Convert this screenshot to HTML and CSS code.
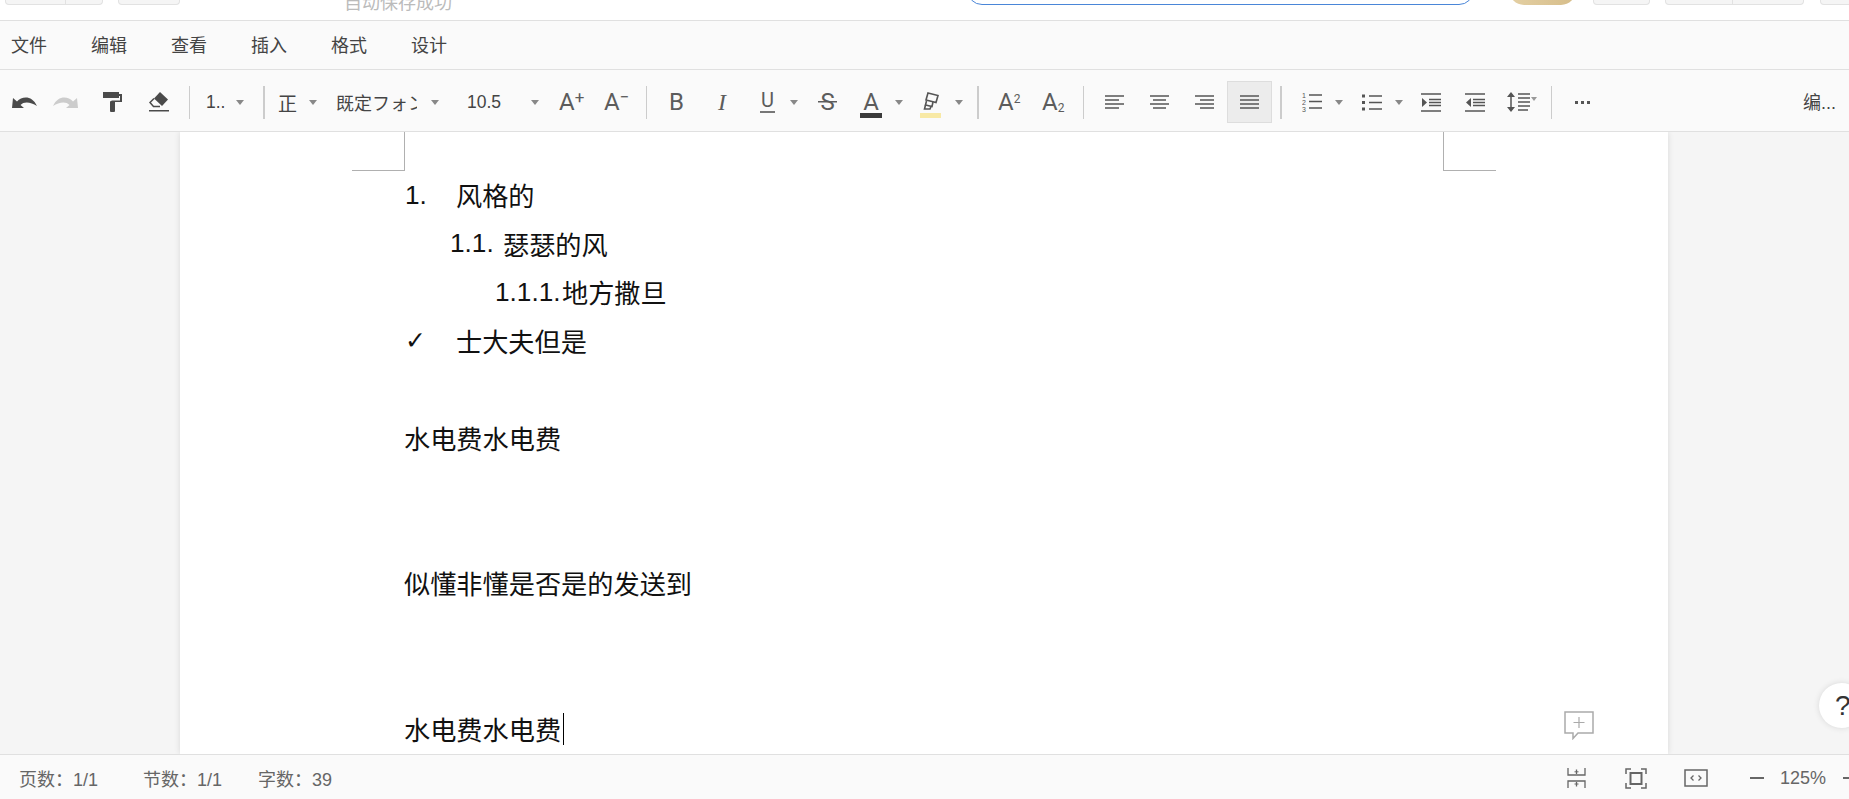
FILE: index.html
```html
<!DOCTYPE html>
<html lang="zh-CN">
<head>
  <meta charset="UTF-8">
  <title>文档编辑</title>
  <link rel="stylesheet" href="styles.css">
</head>
<body>
  <div class="topbar">
    <div class="stub stub-a"><span class="stub-part stub-a1"></span><span class="stub-part stub-a2"></span></div>
    <div class="stub stub-b"></div>
    <div class="save-state">自动保存成功</div>
    <div class="search"></div>
    <div class="gold"></div>
    <div class="stub stub-c"></div>
    <div class="stub stub-d"><span class="stub-part stub-d1"></span><span class="stub-part stub-d2"></span></div>
    <div class="stub stub-e"></div>
  </div>

  <nav class="menubar">
    <a>文件</a><a>编辑</a><a>查看</a><a>插入</a><a>格式</a><a>设计</a>
  </nav>

  <div class="toolbar">
    <svg width="25" height="12" viewBox="0 0 25 12" class="dark"><path d="M0 12 L1 2 L5 5.500 C10 0 20 -1 25 10 C19 6 12 5 8.500 9 L12 12 Z"/></svg>
    <svg width="25" height="12" viewBox="0 0 25 12" class="off"><path d="M25 12 L24 2 L20 5.500 C15 0 5 -1 0 10 C6 6 13 5 16.500 9 L13 12 Z"/></svg>
    <svg width="20" height="20" viewBox="0 0 20 20" class="dark"><path d="M0 0H16V2H19V10H10V12H7V10.500H8.500V8.500H17V4H16V6H0Z"/><rect x="7" y="9" width="5" height="11" rx="1"/></svg>
    <svg width="20" height="20" viewBox="0 0 20 20" class="dark"><path d="M11 0 L19 7.500 L13 14 L5 6.500 Z"/><path d="M5 6.500 L1 10.500 L4.500 14.500 H11" fill="none" stroke="#4a4a4a" stroke-width="1.500"/><rect y="18" width="20" height="1.500"/></svg>
    <span class="sep"></span>
    <span class="tb-text">1..</span><i class="caret"></i>
    <span class="sep sep-wide"></span>
    <span class="tb-text tb-cjk">正</span><i class="caret"></i>
    <span class="tb-text tb-font">既定フォン</span><i class="caret"></i>
    <span class="tb-text">10.5</span><i class="caret"></i>
    <span class="glyph">A<sup>+</sup></span>
    <span class="glyph">A<sup>−</sup></span>
    <span class="sep"></span>
    <span class="glyph">B</span>
    <span class="glyph glyph-i">I</span>
    <span class="glyph glyph-u">U</span><i class="caret"></i>
    <span class="glyph glyph-s">S</span>
    <span class="glyph glyph-color">A</span><i class="caret"></i>
    <span class="marker">
      <svg width="17" height="20" viewBox="0 0 17 20" fill="none" stroke="#555" stroke-width="1.600"><path d="M6 1 L16 3.500 L14 10.500 L4 8 Z"/><path d="M4.500 9 L3.500 13 L10 14.500 L11 10"/><path d="M3.500 13 L2.500 17 H8 L9 14.500"/></svg>
    </span><i class="caret"></i>
    <span class="sep sep-wide"></span>
    <span class="glyph">A<sup class="num">2</sup></span>
    <span class="glyph">A<sub class="num">2</sub></span>
    <span class="sep"></span>
    <svg width="19" height="14" viewBox="0 0 19 14" class="lines"><path d="M0 1H19M0 5H14M0 9H19M0 13H14"/></svg>
    <svg width="19" height="14" viewBox="0 0 19 14" class="lines"><path d="M0 1H19M3 5H16M0 9H19M3 13H16"/></svg>
    <svg width="19" height="14" viewBox="0 0 19 14" class="lines"><path d="M0 1H19M5 5H19M0 9H19M5 13H19"/></svg>
    <span class="active">
      <svg width="19" height="15" viewBox="0 0 19 15" class="lines"><path d="M0 1H19M0 5H19M0 9H19M0 13H19"/></svg>
    </span>
    <span class="sep sep-wide"></span>
    <svg width="20" height="20" viewBox="0 0 20 20" class="lines"><text x="0" y="6" class="tiny">1</text><text x="0" y="13" class="tiny">2</text><text x="0" y="20" class="tiny">3</text><path d="M7 3H20M7 9.500H20M7 16H20"/></svg><i class="caret"></i>
    <svg width="20" height="17" viewBox="0 0 20 17" class="lines"><path d="M7 2H20M7 8.500H20M7 15H20"/><path d="M0 2H3M0 8.500H3M0 15H3" stroke-width="3"/></svg><i class="caret"></i>
    <svg width="20" height="19" viewBox="0 0 20 19" class="lines"><path d="M0 1H20M8 6.500H20M8 9.500H20M8 12.500H20M0 18H20"/><path d="M1 5L6 9.500L1 14Z" class="solid"/></svg>
    <svg width="20" height="19" viewBox="0 0 20 19" class="lines"><path d="M0 1H20M8 6.500H20M8 9.500H20M8 12.500H20M0 18H20"/><path d="M6 5L1 9.500L6 14Z" class="solid"/></svg>
    <svg width="30" height="20" viewBox="0 0 30 20" class="lines"><path d="M4 3V17"/><path d="M4 0L8 5H0ZM4 20L8 15H0Z" class="solid"/><path d="M11 2H23M11 6H23M11 10H23M11 14H23M11 18H21"/><path d="M24 5H30L27 9Z" class="solid soft"/></svg>
    <span class="sep"></span>
    <span class="dots"><i></i><i></i><i></i></span>
    <span class="tb-edit">编...</span>
  </div>

  <main class="workspace">
    <section class="page">
      <div class="page-top">
        <span class="corner corner-left"></span>
        <span class="corner corner-right"></span>
      </div>
      <p class="line"><span class="mark mark-1">1.</span>风格的</p>
      <p class="line level-2"><span class="mark mark-2">1.1.</span>瑟瑟的风</p>
      <p class="line level-3"><span class="mark mark-3">1.1.1.</span>地方撒旦</p>
      <p class="line"><span class="mark mark-1 mark-check">✓</span>士大夫但是</p>
      <p class="line"></p>
      <p class="line">水电费水电费</p>
      <p class="line"></p>
      <p class="line"></p>
      <p class="line">似懂非懂是否是的发送到</p>
      <p class="line"></p>
      <p class="line"></p>
      <p class="line">水电费水电费<span class="cursor"></span></p>
    </section>
    <svg class="add-comment" width="30" height="29" viewBox="0 0 30 29" fill="none" stroke="#aaa" stroke-width="1.500"><path d="M1 1H29V22H14L9 27.500V22H1Z"/><path d="M15 6V17M9.500 11.500H20.500" stroke-width="1.200"/></svg>
    <div class="help">?</div>
  </main>

  <footer class="statusbar">
    <span class="stat stat-page">页数：1/1</span>
    <span class="stat stat-section">节数：1/1</span>
    <span class="stat stat-words">字数：39</span>
    <svg width="19" height="20" viewBox="0 0 19 20" fill="none" stroke="#666" stroke-width="1.300" class="st-width"><path d="M1 0V7H18V0M1 20V13H18V20M9.500 1.500V6M9.500 14V18.500"/><path d="M7.500 3.800H11.500M7.500 16H11.500" stroke-width="1"/></svg>
    <svg width="22" height="21" viewBox="0 0 22 21" fill="none" stroke="#666" stroke-width="1.500" class="st-page"><path d="M6 1H1V6M16 1H21V6M6 20H1V15M16 20H21V15"/><rect x="5.500" y="5" width="11" height="11" stroke-width="2"/></svg>
    <svg width="24" height="18" viewBox="0 0 24 18" fill="none" stroke="#666" stroke-width="1.500" class="st-window"><rect x="1" y="1" width="22" height="16"/><path d="M9.500 6.500L7 9L9.500 11.500M14.500 6.500L17 9L14.500 11.500" stroke-width="1.300"/></svg>
    <span class="zoom-minus"></span>
    <span class="zoom-value">125%</span>
    <span class="zoom-plus"></span>
  </footer>
</body>
</html>
```

FILE: styles.css
```css
* {
  box-sizing: border-box;
}
html, body {
  height: 100%;
}
body {
  margin: 0;
  display: flex;
  flex-direction: column;
  overflow: hidden;
  font-family: "Liberation Sans", "Noto Sans CJK SC", sans-serif;
  color: #444;
  background: #fff;
}

/* top bar, cut off by the window edge */
.topbar {
  height: 21px;
  display: flex;
  align-items: flex-start;
  overflow: hidden;
  background: #fff;
  border-bottom: 1px solid #e0e0e0;
}
.stub {
  display: flex;
  height: 5px;
  background: #f5f5f5;
  border: 1px solid #e2e2e2;
  border-top: none;
  border-radius: 0 0 4px 4px;
  flex-shrink: 0;
}
.stub-part + .stub-part {
  border-left: 1px solid #e2e2e2;
}
.stub-a {
  width: 98px;
  margin-left: 5px;
}
.stub-a1 { width: 60px; }
.stub-a2 { width: 38px; }
.stub-b {
  width: 62px;
  margin-left: 15px;
}
.save-state {
  width: 110px;
  margin: -6px 0 0 164px;
  font-size: 18px;
  line-height: 18px;
  color: #bbb;
  flex-shrink: 0;
}
.search {
  width: 507px;
  height: 30px;
  margin: -25px 0 0 513px;
  border: 1px solid #4a86d8;
  border-radius: 16px;
  flex-shrink: 0;
}
.gold {
  width: 67px;
  height: 30px;
  margin: -25px 0 0 35px;
  border-radius: 15px;
  background: linear-gradient(90deg, #e4d0a4, #d6bd8a);
  flex-shrink: 0;
}
.stub-c {
  width: 57px;
  margin-left: 17px;
}
.stub-d {
  width: 139px;
  margin-left: 15px;
}
.stub-d1 { width: 67px; }
.stub-d2 { width: 72px; }
.stub-e {
  width: 60px;
  margin-left: 16px;
}

/* menu */
.menubar {
  height: 49px;
  display: flex;
  align-items: center;
  gap: 44px;
  padding: 0 0 2px 11px;
  font-size: 18px;
  color: #444;
  background: #fafafa;
  border-bottom: 1px solid #e0e0e0;
}

/* toolbar: one column per control, tracks are the distance to the next control */
.toolbar {
  height: 62px;
  display: grid;
  grid-template-columns:
    41px 50px 46px 40px 17px 30px 27px 15px 31px 27px 95px
    36px 64px 28px 45px 42px 23px 48px 43px 30px 28px 42px
    35px 25px 35px 22px 21px 44px 41px 22px 45px 45px 32px
    53px 22px 33px 27px 33px 26px 44px 42px 44px 24px 228px 1fr;
  align-items: center;
  justify-items: start;
  padding: 3px 0 0 12px;
  background: #fafafa;
  border-bottom: 1px solid #e0e0e0;
  color: #555;
}
.dark { fill: #4a4a4a; }
.off { fill: #ccc; }
.sep {
  width: 1px;
  height: 33px;
  background: #ccc;
}
.sep-wide {
  width: 2px;
}
.caret {
  width: 0;
  height: 0;
  border-left: 4px solid transparent;
  border-right: 4px solid transparent;
  border-top: 5px solid #888;
}
.tb-text {
  font-size: 17.5px;
  color: #444;
  white-space: nowrap;
}
.tb-cjk {
  font-size: 19px;
}
.tb-font {
  width: 81px;
  overflow: hidden;
  font-size: 18px;
}
.tb-edit {
  margin-top: -2px;
  font-size: 18px;
  color: #444;
  white-space: nowrap;
}
.glyph {
  font-family: Roboto, "Liberation Sans", sans-serif;
  font-size: 24px;
  line-height: 1;
  color: #5c5c5c;
  white-space: nowrap;
}
.glyph sup, .glyph sub {
  font-size: 17px;
  line-height: 0;
}
.glyph sup {
  vertical-align: 7px;
}
.glyph sub {
  vertical-align: -2px;
}
.glyph .num {
  font-size: 12px;
}
.glyph-i {
  font-family: "Liberation Serif", serif;
  font-style: italic;
  margin-left: 1px;
}
.glyph-u {
  display: block;
  font-size: 20px;
  padding: 0 1px 1px;
  border-bottom: 2px solid #777;
  line-height: 19px;
}
.glyph-s {
  display: block;
  width: 19px;
  text-align: center;
  background: linear-gradient(#5c5c5c, #5c5c5c) center / 100% 1.500px no-repeat;
}
.glyph-color {
  display: block;
  width: 22px;
  padding-top: 6px;
  text-align: center;
  line-height: 21px;
  border-bottom: 5px solid #3a3a3a;
}
.marker {
  display: flex;
  justify-content: center;
  width: 21px;
  height: 32px;
  padding-top: 6px;
  border-bottom: 5px solid #f8e9a5;
}
.lines {
  fill: none;
  stroke: #555;
  stroke-width: 1.5;
}
.lines .solid {
  fill: #555;
  stroke: none;
}
.lines .soft {
  fill: #999;
}
.lines .tiny {
  font-size: 7px;
  fill: #555;
  stroke: none;
}
.active {
  width: 45px;
  height: 42px;
  display: flex;
  align-items: center;
  justify-content: center;
  background: #ececec;
  border: 1px solid #ddd;
}
.dots {
  display: flex;
  gap: 3px;
}
.dots i {
  width: 3px;
  height: 3px;
  background: #555;
}

/* document area */
.workspace {
  position: relative;
  flex: 1;
  min-height: 0;
  overflow: hidden;
  background: #f5f5f5;
}
.page {
  width: 1488px;
  height: 100%;
  margin-left: 180px;
  overflow: hidden;
  background: #fff;
  box-shadow: 0 0 6px rgba(0, 0, 0, 0.12);
  font-size: 26.2px;
  color: #111;
}
.page-top {
  display: flex;
  justify-content: space-between;
  padding: 0 172px;
}
.corner {
  width: 53px;
  height: 39px;
  border-bottom: 1px solid #b0b0b0;
}
.corner-left {
  border-right: 1px solid #b0b0b0;
}
.corner-right {
  border-left: 1px solid #b0b0b0;
}
.line {
  display: flex;
  align-items: center;
  height: 48.5px;
  margin: 0;
  padding-left: 224px;
  white-space: nowrap;
}
.level-2 {
  padding-left: 270px;
}
.level-3 {
  padding-left: 315px;
}
.mark-1 {
  width: 52px;
  padding-left: 1px;
}
.mark-2 { width: 53px; }
.mark-3 { width: 67px; }
.mark-check {
  font-family: "DejaVu Sans", sans-serif;
  font-size: 25px;
}
.cursor {
  width: 1px;
  height: 32px;
  margin-left: 2px;
  background: #000;
}
.add-comment {
  position: absolute;
  left: 1564px;
  top: 579px;
}
.help {
  position: absolute;
  left: 1819px;
  top: 551px;
  width: 45px;
  height: 45px;
  border-radius: 50%;
  background: #fff;
  box-shadow: 0 0 6px rgba(0, 0, 0, 0.12);
  padding-left: 16px;
  font-size: 28px;
  line-height: 45px;
  color: #333;
}

/* status bar */
.statusbar {
  height: 45px;
  flex-shrink: 0;
  display: flex;
  align-items: center;
  padding-top: 2px;
  overflow: hidden;
  background: #fafafa;
  border-top: 1px solid #e0e0e0;
  font-size: 18px;
  color: #666;
}
.stat {
  flex-shrink: 0;
  white-space: nowrap;
}
.stat-page {
  width: 124px;
  margin-left: 19px;
}
.stat-section {
  width: 115px;
}
.stat-words {
  width: 1309px;
}
.st-width {
  flex-shrink: 0;
}
.st-page {
  margin-left: 39px;
  flex-shrink: 0;
}
.st-window {
  margin-left: 37px;
  flex-shrink: 0;
}
.zoom-minus {
  width: 14px;
  height: 1.500px;
  margin-left: 42px;
  background: #666;
  flex-shrink: 0;
}
.zoom-value {
  width: 63px;
  margin-left: 16px;
  font-size: 18px;
  flex-shrink: 0;
}
.zoom-plus {
  width: 14px;
  height: 1.500px;
  background: #666;
  flex-shrink: 0;
}
```
